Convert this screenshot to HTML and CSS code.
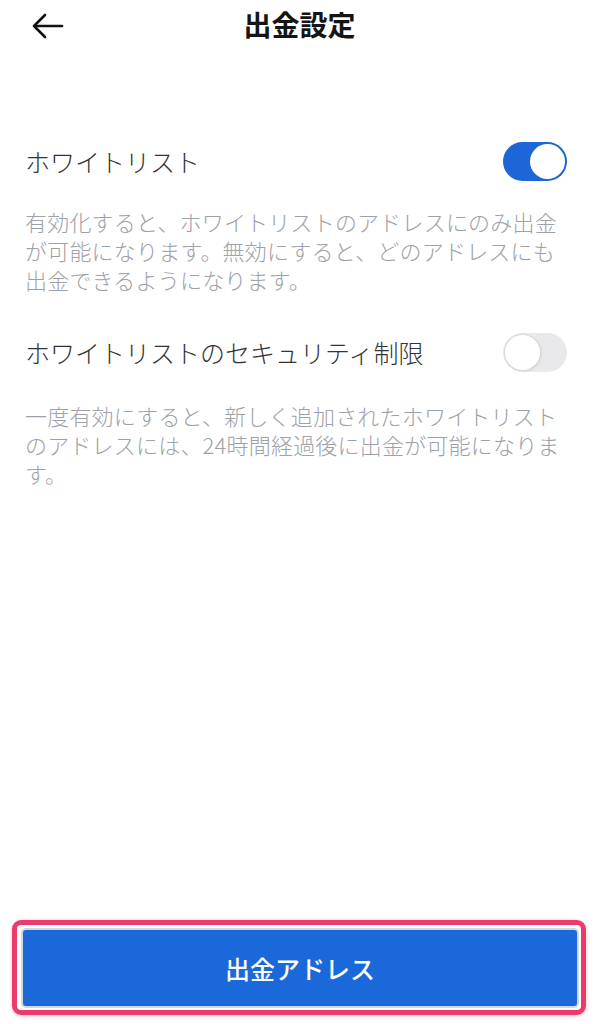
FILE: index.html
```html
<!DOCTYPE html>
<html lang="ja">
<head>
  <meta charset="UTF-8">
  <meta name="viewport" content="width=device-width, initial-scale=1.0">
  <title>出金設定</title>
  <link rel="stylesheet" href="styles.css">
</head>
<body>

  <header class="top-bar">
    <button class="back-button" aria-label="戻る">
      <svg width="32" height="26" viewBox="0 0 32 26" fill="none" stroke="#111" stroke-width="2.6" stroke-linecap="round" stroke-linejoin="round">
        <path d="M30 13H3"/>
        <path d="M13 2L2 13l11 11"/>
      </svg>
    </button>
    <h1 class="page-title">出金設定</h1>
    <span></span>
  </header>

  <main class="settings">
    <section class="setting">
      <div class="setting-row">
        <span class="setting-label">ホワイトリスト</span>
        <span class="toggle toggle-on"><span class="knob"></span></span>
      </div>
      <p class="setting-note">有効化すると、ホワイトリストのアドレスにのみ出金が可能になります。無効にすると、どのアドレスにも出金できるようになります。</p>
    </section>

    <section class="setting">
      <div class="setting-row">
        <span class="setting-label">ホワイトリストのセキュリティ制限</span>
        <span class="toggle"><span class="knob"></span></span>
      </div>
      <p class="setting-note">一度有効にすると、新しく追加されたホワイトリストのアドレスには、24時間経過後に出金が可能になります。</p>
    </section>
  </main>

  <footer class="bottom">
    <div class="highlight">
      <button class="address-button">出金アドレス</button>
    </div>
  </footer>

</body>
</html>
```

FILE: styles.css
```css
* {
  box-sizing: border-box;
}
body {
  margin: 0;
  height: 1024px;
  display: flex;
  flex-direction: column;
  background: #fff;
  color: #222;
  font-family: "Noto Sans CJK JP", "Noto Sans", sans-serif;
}
.top-bar {
  height: 52px;
  display: grid;
  grid-template-columns: 1fr auto 1fr;
  align-items: center;
}
.back-button {
  justify-self: start;
  margin-left: 32px;
  padding: 0;
  border: none;
  background: none;
  display: flex;
}
.page-title {
  margin: -5px 0 0;
  font-size: 28px;
  font-weight: 700;
  color: #151515;
}
.settings {
  flex: 1;
  padding: 89px 32px 0 25px;
}
.setting-row {
  height: 40px;
  display: flex;
  align-items: center;
  justify-content: space-between;
}
.setting-label {
  font-size: 25px;
  font-weight: 300;
  color: #333;
}
.setting-note {
  margin: 26px 0 38px;
  font-size: 22px;
  font-weight: 300;
  letter-spacing: 0.2px;
  line-height: 29px;
  color: #9ea2a8;
}
.setting:last-child .setting-note {
  margin-top: 29px;
}
.toggle {
  width: 64px;
  height: 39px;
  border-radius: 20px;
  background: #e9e9eb;
  display: flex;
  align-items: center;
  padding: 2px;
}
.toggle .knob {
  width: 35px;
  height: 35px;
  border-radius: 50%;
  background: #fff;
  box-shadow: 0 0 0 1px #d9d9d9, 1px 1px 3px rgba(0, 0, 0, 0.12);
}
.toggle-on {
  background: #1c66d8;
  justify-content: flex-end;
}
.toggle-on .knob {
  box-shadow: 0 0 0 1px #2a66c8;
}
.bottom {
  padding: 0 13px 9px 12px;
}
.highlight {
  border: 5px solid #ec3a6b;
  border-radius: 9px;
  padding: 5px 4px 4px 6px;
  box-shadow: 0 1px 4px rgba(236, 58, 107, 0.3);
}
.address-button {
  width: 100%;
  height: 76px;
  border: none;
  border-radius: 3px;
  background: #1a68d9;
  box-shadow: 0 0 0 2px #d3d6da;
  color: #fff;
  font-family: inherit;
  font-size: 25px;
  font-weight: 500;
}
```
